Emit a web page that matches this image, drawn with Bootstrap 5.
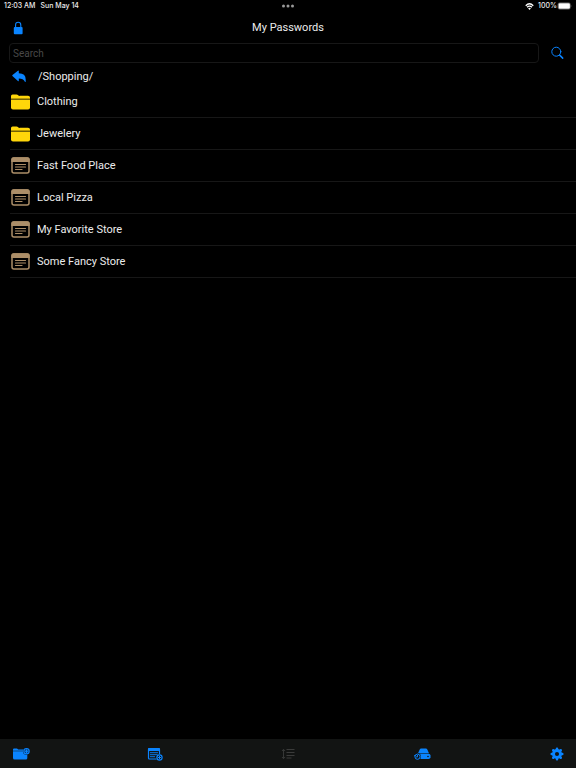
<!DOCTYPE html>
<html lang="en">
<head>
<meta charset="utf-8">
<meta name="viewport" content="width=device-width, initial-scale=1">
<title>My Passwords</title>
<link rel="stylesheet" href="https://cdn.jsdelivr.net/npm/bootstrap@5.3.0/dist/css/bootstrap.min.css">
<style>
  body { background: #000; color: #ececec; font: 400 11px/16px Roboto, "Liberation Sans", sans-serif; }
  svg { display: block; flex: none; }
  .status-bar { height: 12px; padding: 0 4px; font-family: Inter, "Liberation Sans", sans-serif; font-size: 7px; line-height: 12px; font-weight: 500; }
  .status-side { flex: 1 1 0; }
  .status-date { gap: 5px; }
  .title-bar { height: 31px; padding: 0 12px; }
  .title-bar h1 { font-size: 11px; line-height: 16px; font-weight: 400; }
  .bar-side { width: 24px; }
  .tool { background: none; border: 0; padding: 0; color: #0a84ff; }
  .tool:disabled { color: #3a3b3a; }
  .search-bar { padding: 0 12px 0 9px; gap: 12px; }
  .search-field, .search-field:focus { height: 20px; min-height: 0; padding: 0 3px; font-size: 10px; line-height: 16px; color: #ececec; background: #000; border: 1px solid #171717; border-radius: 4px; }
  .search-field::placeholder { color: #484848; opacity: 1; }
  .path-bar { height: 23px; padding: 4px 12px 0; gap: 11px; }
  .entries { padding-left: 10px; }
  .entries > .entry, .entries > .entry:last-child { height: 32px; padding: 0 0 0 1px; gap: 7px; color: #ececec; background: none; border: 0; border-bottom: 1px solid #171717; }
  .entries > .entry:hover, .entries > .entry:focus { color: #fff; }
  .bottom-bar { height: 29px; padding: 0 12px; background: #121413; }
</style>
<script defer src="https://cdn.jsdelivr.net/npm/bootstrap@5.3.0/dist/js/bootstrap.bundle.min.js"></script>
</head>
<body class="d-flex flex-column min-vh-100">
<svg width="0" height="0" class="position-absolute" aria-hidden="true">
  <symbol id="folder" viewBox="0 0 19 16">
    <path fill="#ffd60a" d="M0 4.800V2Q0 .5 1.600 .5H5.500Q6.500 .5 7.200 1.300T8.800 1.800H17Q19 1.800 19 3.600V4.800Z"/>
    <path fill="#ffd60a" d="M0 5.700H19V13.500Q19 15.500 17 15.500H2Q0 15.500 0 13.500Z"/>
    <path fill="#8a7506" d="M0 4.800H19V5.700H0Z"/>
  </symbol>
  <symbol id="note" viewBox="0 0 19 17">
    <rect x="1" y="1" width="17" height="15" rx="2" fill="none" stroke="#ac8e68" stroke-width="1.500"/>
    <path fill="#ac8e68" d="M.3 5V2.500Q.3 .3 2.500 .3H16.500Q18.700 .3 18.700 2.500V5Z"/>
    <path stroke="#ac8e68" stroke-width="1.200" stroke-linecap="round" d="M4.500 7.500H14.500M4.500 10H14.500M4.500 12.500H11"/>
  </symbol>
</svg>

<header>
  <div class="status-bar d-flex align-items-center">
    <div class="status-side status-date d-flex"><span>12:03 AM</span><span>Sun May 14</span></div>
    <svg width="14" height="4" fill="#999" aria-hidden="true"><circle cx="2.500" cy="2" r="1.500"/><circle cx="7" cy="2" r="1.500"/><circle cx="11.500" cy="2" r="1.500"/></svg>
    <div class="status-side d-flex align-items-center justify-content-end">
      <svg width="9" height="7" viewBox="0 0 16 13" fill="none" stroke="#fff" stroke-width="2.500" class="me-1" aria-label="Wi-Fi"><path d="M1 5Q8-2 15 5M3.600 8Q8 3.500 12.400 8"/><path fill="#fff" stroke="none" d="M5.500 10Q8 7.800 10.500 10L8 13Z"/></svg>
      <span>100%</span>
      <svg width="15" height="8" viewBox="0 0 15 8" aria-label="Battery full"><rect x="1" y=".8" width="12.400" height="6.400" rx="1.800" fill="none" stroke="#888" stroke-width=".6"/><rect x="1.500" y="1.300" width="11.400" height="5.400" rx="1.200" fill="#fff"/><path d="M13.900 3Q15 4 13.900 5Z" fill="#999"/></svg>
    </div>
  </div>
  <div class="title-bar d-flex align-items-center justify-content-between">
    <div class="bar-side d-flex"><button class="tool" type="button" aria-label="Lock">
      <svg width="12" height="14" viewBox="0 0 12 14"><rect x="1.800" y="6" width="8.800" height="7.300" rx="1" fill="currentColor"/><path d="M3.600 6.500V4Q3.600 1.300 6.200 1.300T8.800 4V6.500" fill="none" stroke="currentColor" stroke-width="1.100"/></svg>
    </button></div>
    <h1 class="m-0">My Passwords</h1>
    <div class="bar-side"></div>
  </div>
  <form class="search-bar d-flex align-items-center" role="search">
    <input class="search-field form-control shadow-none" type="search" aria-label="Search" placeholder="Search">
    <button class="tool" type="button" aria-label="Search">
      <svg width="13" height="14" viewBox="0 0 13 14" fill="none" stroke="currentColor" stroke-linecap="round"><circle cx="5.300" cy="5.700" r="4.500" stroke-width="1"/><path d="M8.700 9.100L11.700 12.100" stroke-width="1.500"/></svg>
    </button>
  </form>
</header>

<main class="flex-grow-1">
  <nav class="path-bar d-flex align-items-center" aria-label="Folder path">
    <button class="tool" type="button" aria-label="Back">
      <svg width="15" height="13" viewBox="0 0 15 13" fill="currentColor"><path d="M.4 5.900Q0 5.400 .5 5L5.900 .7Q6.800 .2 6.800 1.200V3.200Q13.700 3.300 13.700 9.500V11.500Q13.600 12.400 12.900 11.700Q11.300 8.500 6.800 8.500V10.600Q6.800 11.600 5.900 11.100Z"/></svg>
    </button>
    <span>/Shopping/</span>
  </nav>
  <div class="entries list-group list-group-flush rounded-0">
    <a href="#" class="entry list-group-item list-group-item-action d-flex align-items-center"><svg width="19" height="16"><use href="#folder"/></svg>Clothing</a>
    <a href="#" class="entry list-group-item list-group-item-action d-flex align-items-center"><svg width="19" height="16"><use href="#folder"/></svg>Jewelery</a>
    <a href="#" class="entry list-group-item list-group-item-action d-flex align-items-center"><svg width="19" height="17"><use href="#note"/></svg>Fast Food Place</a>
    <a href="#" class="entry list-group-item list-group-item-action d-flex align-items-center"><svg width="19" height="17"><use href="#note"/></svg>Local Pizza</a>
    <a href="#" class="entry list-group-item list-group-item-action d-flex align-items-center"><svg width="19" height="17"><use href="#note"/></svg>My Favorite Store</a>
    <a href="#" class="entry list-group-item list-group-item-action d-flex align-items-center"><svg width="19" height="17"><use href="#note"/></svg>Some Fancy Store</a>
  </div>
</main>

<footer class="bottom-bar d-flex align-items-center justify-content-between">
  <button class="tool" type="button" aria-label="New folder">
    <svg width="18" height="14" viewBox="0 0 18 14"><path fill="currentColor" d="M1 3.800V2.600Q1 1.600 2 1.600H5L6.300 2.600H12V3.800Z"/><path fill="currentColor" d="M1 4.300H15.300V11Q15.300 12.500 13.800 12.500H2.500Q1 12.500 1 11Z"/><circle cx="14.500" cy="4.200" r="3.500" fill="#121413"/><circle cx="14.500" cy="4.200" r="2.700" fill="#073d75" stroke="currentColor" stroke-width="1.100"/><path stroke="currentColor" stroke-width="1.100" d="M12.800 4.200H16.200M14.500 2.500V5.900"/></svg>
  </button>
  <button class="tool" type="button" aria-label="New entry">
    <svg width="16" height="14" viewBox="0 0 16 14"><rect x="1.500" y="1.500" width="11" height="10.500" rx="1" fill="none" stroke="currentColor" stroke-width="1.200"/><path fill="currentColor" d="M1 4V2Q1 1 2 1H12Q13 1 13 2V4Z"/><path stroke="currentColor" stroke-width=".9" d="M3 5.700H11M3 7.700H11M3 9.700H8"/><circle cx="12.500" cy="10.500" r="3.500" fill="#121413"/><circle cx="12.500" cy="10.500" r="2.600" fill="none" stroke="currentColor" stroke-width="1.200"/><path stroke="currentColor" d="M10.900 10.500H14.100M12.500 8.900V12.100"/></svg>
  </button>
  <button class="tool" type="button" aria-label="Sort" disabled>
    <svg width="16" height="12" viewBox="0 0 16 12" fill="none" stroke="currentColor"><path d="M3.500 1.500V10.500M2 3L3.500 1.300L5 3M2 9L3.500 10.700L5 9" stroke-width=".9"/><path d="M6.500 1.500H14.500M6.500 4.500H14.500M6.500 7.500H14.500M6.500 10H11.500"/></svg>
  </button>
  <button class="tool" type="button" aria-label="Sync drive">
    <svg width="20" height="14" viewBox="0 0 20 14"><path fill="currentColor" d="M5 6.200L6.700 2.600Q7.100 1.600 8.100 1.600H12.900Q13.900 1.600 14.300 2.600L16 6.200Z"/><path fill="currentColor" d="M4 6.700H15.500Q17.500 6.700 17.500 8.500V10.200Q17.500 12 15.500 12H4Z"/><circle cx="4.500" cy="9.700" r="3.400" fill="#121413"/><circle cx="4.500" cy="9.700" r="2.600" fill="none" stroke="currentColor" stroke-width="1"/><path fill="none" stroke="currentColor" stroke-width=".9" d="M4.500 8V9.900H3M1 8.700H3"/><circle cx="15" cy="9.500" r=".8" fill="#121413"/></svg>
  </button>
  <button class="tool" type="button" aria-label="Settings">
    <svg width="14" height="14" viewBox="0 0 14 14"><circle cx="7" cy="7" r="3.500" fill="none" stroke="currentColor" stroke-width="2.900"/><path stroke="currentColor" stroke-width="2.500" stroke-linecap="round" d="M7 1.700V3M7 11V12.300M1.700 7H3M11 7H12.300M3.250 3.250L4.200 4.200M9.800 9.800L10.750 10.750M3.250 10.750L4.200 9.800M9.800 4.200L10.750 3.250"/></svg>
  </button>
</footer>
</body>
</html>
